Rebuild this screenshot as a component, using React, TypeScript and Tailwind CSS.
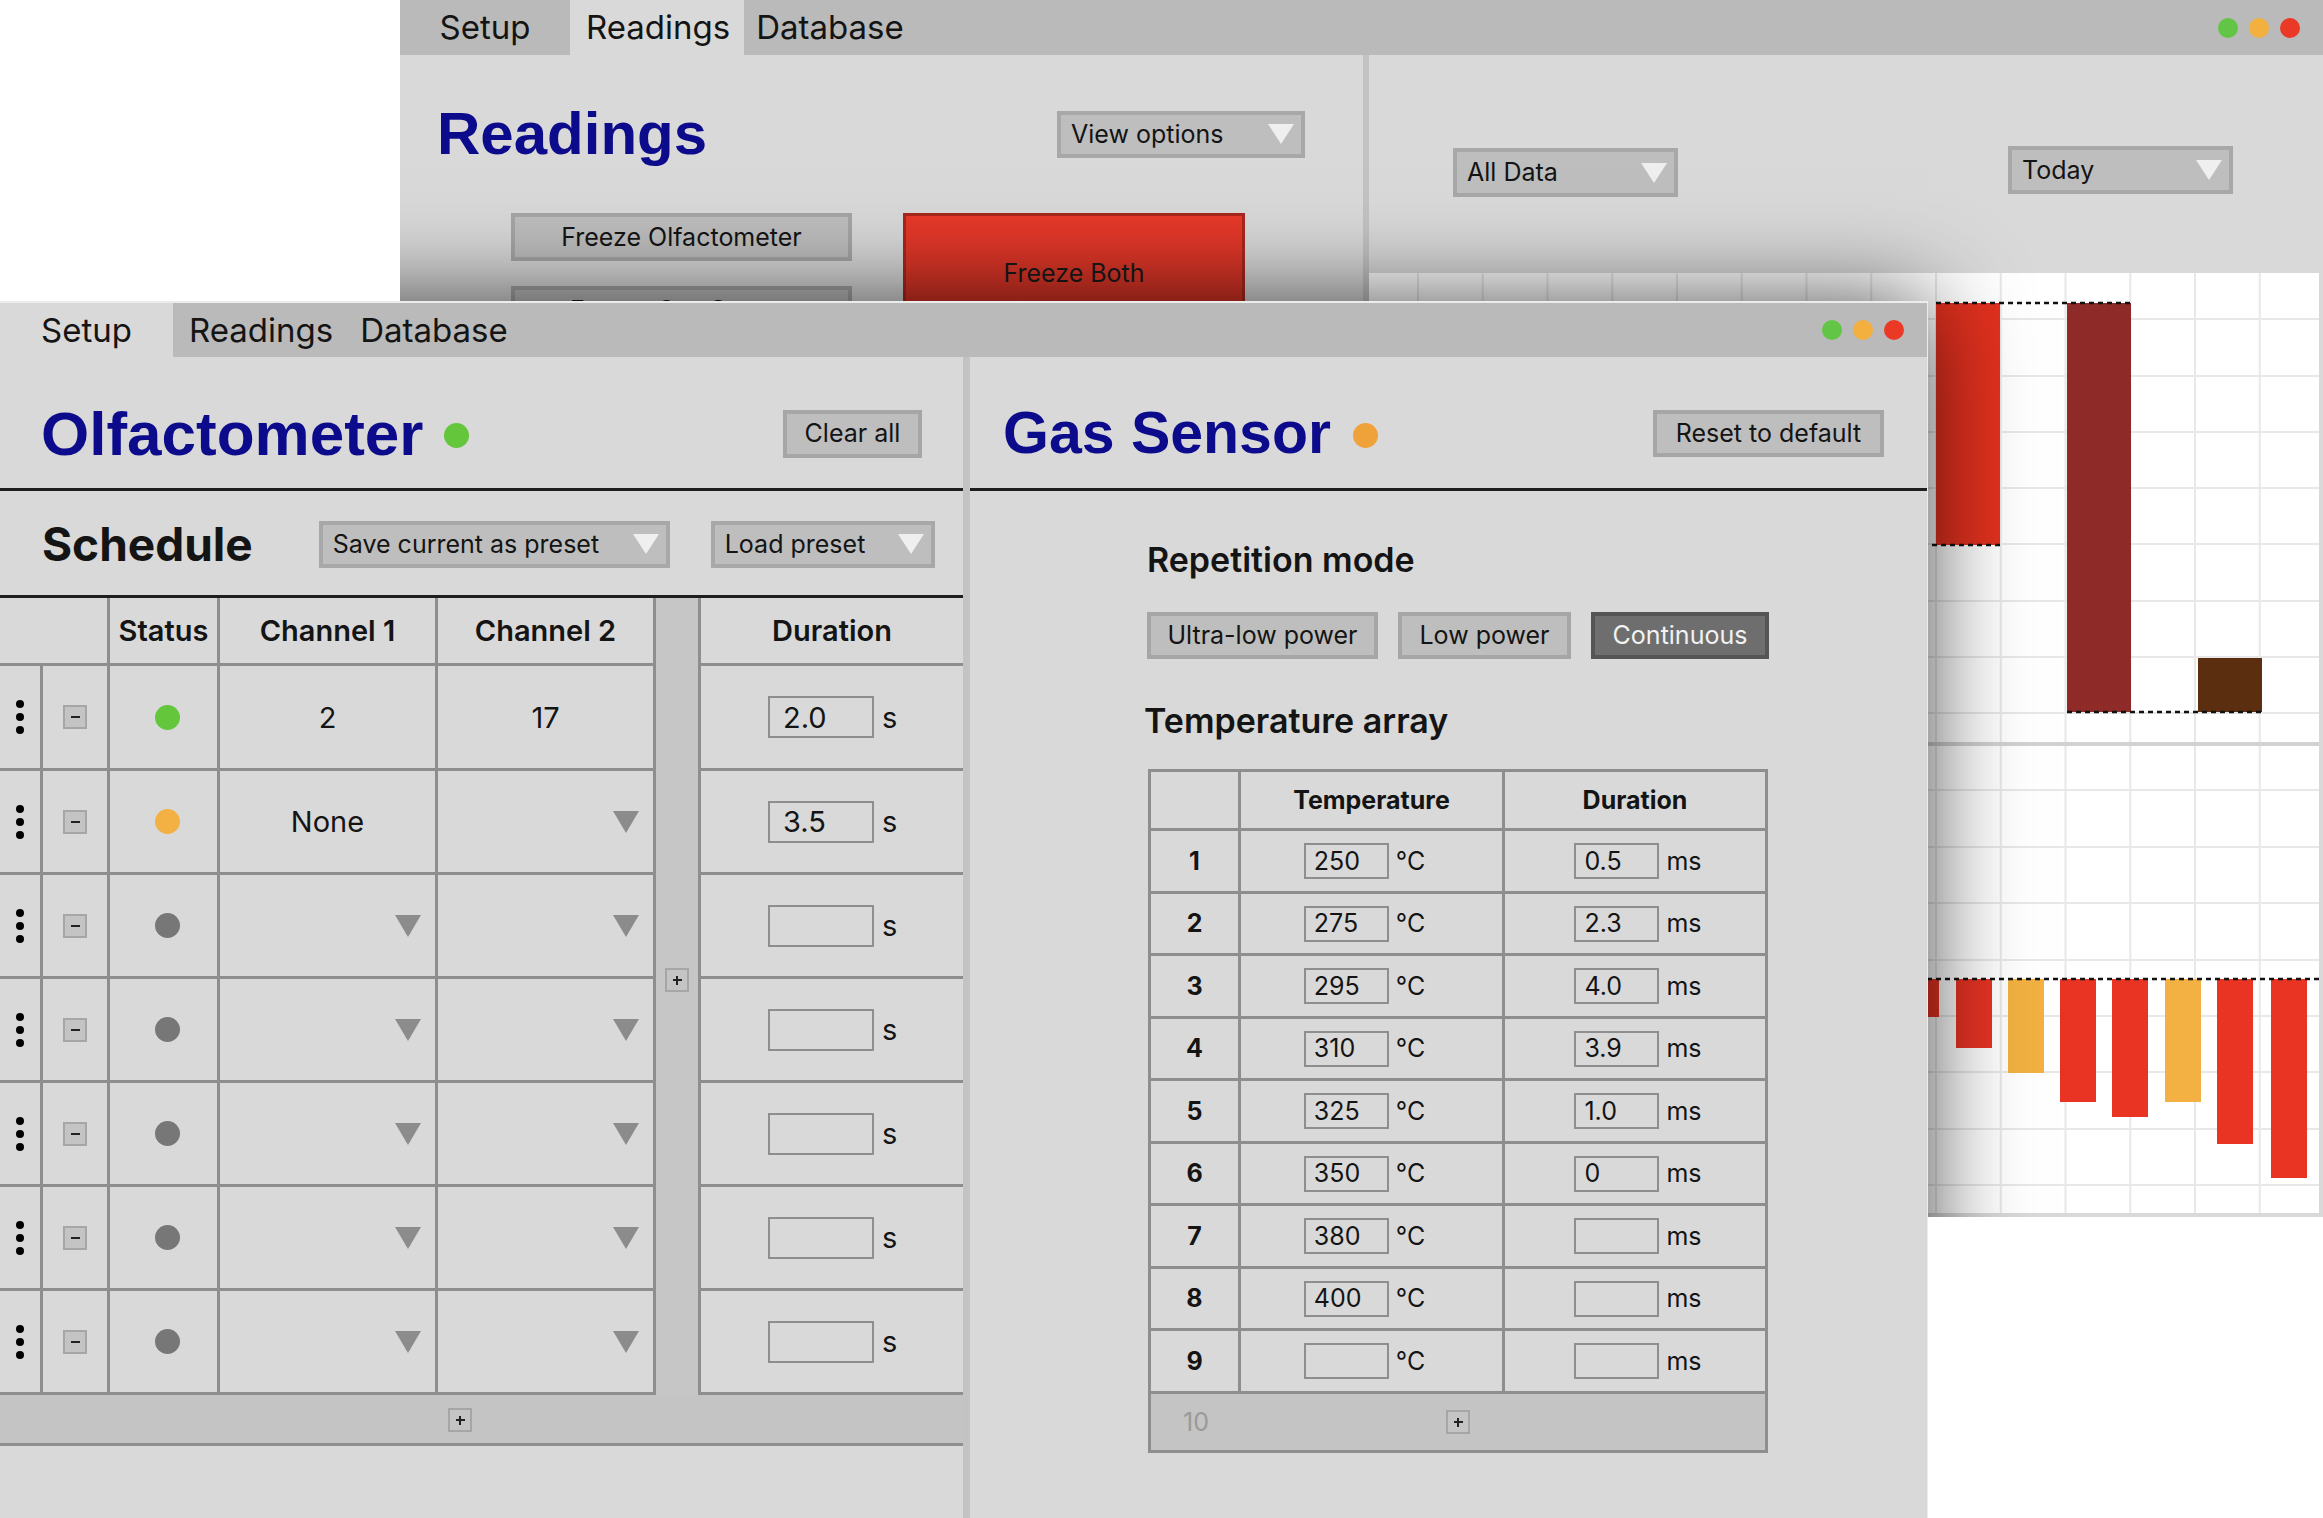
import React from "react";

const gridX = Array.from({ length: 14 }, (_, k) => 49 + 64.75 * k);

function Lights({ className }: { className?: string }) {
  return (
    <div className={"flex items-center gap-[11px] " + (className || "")}>
      <div className="w-[20px] h-[20px] rounded-full bg-[#62c545]" />
      <div className="w-[20px] h-[20px] rounded-full bg-[#f3b03e]" />
      <div className="w-[20px] h-[20px] rounded-full bg-[#ea3a26]" />
    </div>
  );
}

function Heading({ children, className }: { children: React.ReactNode; className?: string }) {
  return (
    <div
      className={
        "font-['Liberation_Sans',Arial,sans-serif] font-bold leading-none text-[#0b0b8b] " + (className || "text-[60px]")
      }
    >
      {children}
    </div>
  );
}

function Dropdown({ label, className }: { label: string; className?: string }) {
  return (
    <div
      className={
        "flex items-center justify-between border-[4px] border-[#a8a8a8] bg-[#bebebe] pl-[10px] pr-[7px] text-[25px] leading-none " +
        (className || "")
      }
    >
      <span>{label}</span>
      <svg width="26" height="20" viewBox="0 0 26 20">
        <polygon points="0,0 26,0 13,20" fill="#efefef" />
      </svg>
    </div>
  );
}

function Button({ children, className }: { children: React.ReactNode; className?: string }) {
  return (
    <div
      className={
        "flex items-center justify-center border-[4px] border-[#a6a6a6] bg-[#bebebe] text-[25px] leading-none " +
        (className || "")
      }
    >
      {children}
    </div>
  );
}

function SmallBox({ plus }: { plus?: boolean }) {
  return (
    <div className="relative flex w-[24px] h-[24px] items-center justify-center border-2 border-[#a6a6a6] bg-[#c4c4c4]">
      <div className="w-[9px] h-[2px] bg-[#222]" />
      {plus && <div className="absolute w-[2px] h-[9px] bg-[#222]" />}
    </div>
  );
}

function Tri() {
  return (
    <svg width="26" height="22" viewBox="0 0 26 22">
      <polygon points="0,0 26,0 13,22" fill="#8c8c8c" />
    </svg>
  );
}

function Chart1() {
  return (
    <svg width="950" height="469" className="block">
      {gridX.map((x) => (
        <line key={x} x1={x} x2={x} y1={0} y2={469} stroke="#e8e8e8" strokeWidth={2} />
      ))}
      {[46, 103, 159, 215, 271, 328, 384, 440].map((y) => (
        <line key={y} x1={0} x2={950} y1={y} y2={y} stroke="#e8e8e8" strokeWidth={2} />
      ))}
      <rect x={567} y={30} width={64} height={242} fill="#e3311f" />
      <rect x={698} y={30} width={64} height={409} fill="#8e2a27" />
      <rect x={829} y={385} width={64} height={54} fill="#5a2e0e" />
      <g stroke="#111" strokeWidth={2.5} strokeDasharray="5 4">
        <line x1={500} x2={631} y1={272} y2={272} />
        <line x1={567} x2={762} y1={30} y2={30} />
        <line x1={698} x2={893} y1={439} y2={439} />
      </g>
    </svg>
  );
}

const bars2 = [
  { x: 482, b: 300, c: "#e93424" },
  { x: 534, b: 271, c: "#e93424" },
  { x: 587, b: 302, c: "#e93424" },
  { x: 639, b: 327, c: "#f2b142" },
  { x: 691, b: 356, c: "#e93424" },
  { x: 743, b: 371, c: "#e93424" },
  { x: 796, b: 356, c: "#f2b142" },
  { x: 848, b: 398, c: "#e93424" },
  { x: 902, b: 432, c: "#e93424" },
];

function Chart2() {
  return (
    <svg width="950" height="467" className="block">
      {gridX.map((x) => (
        <line key={x} x1={x} x2={x} y1={0} y2={467} stroke="#e8e8e8" strokeWidth={2} />
      ))}
      {[44, 101, 157, 214, 270, 326, 383, 439].map((y) => (
        <line key={y} x1={0} x2={950} y1={y} y2={y} stroke="#e8e8e8" strokeWidth={2} />
      ))}
      {bars2.map((b) => (
        <rect key={b.x} x={b.x} y={233} width={36} height={b.b - 233} fill={b.c} />
      ))}
      <line x1={0} x2={950} y1={233} y2={233} stroke="#111" strokeWidth={2.5} strokeDasharray="5 4" />
    </svg>
  );
}

function BackWindow() {
  return (
    <div className="absolute left-[400px] top-0 w-[1923px] h-[1217px] overflow-hidden bg-[#d9d9d9]">
      <div className="flex h-[55px] bg-[#bababa] text-[33px] leading-none">
        <div className="flex w-[170px] items-center justify-center">Setup</div>
        <div className="flex items-center bg-[#d9d9d9] pl-[16px] pr-[14px]">Readings</div>
        <div className="flex items-center pl-[12px]">Database</div>
        <Lights className="ml-auto mr-[23px]" />
      </div>
      <div className="flex h-[1162px]">
        <div className="flex w-[963px] flex-col">
          <div className="flex h-[158px] items-center pl-[37px] pr-[58px]">
            <Heading>Readings</Heading>
            <Dropdown label="View options" className="ml-auto w-[248px] h-[47px]" />
          </div>
          <div className="flex gap-[51px] pl-[111px]">
            <div className="flex flex-col gap-[25px]">
              <Button className="w-[341px] h-[48px]">Freeze Olfactometer</Button>
              <Button className="w-[341px] h-[48px]">Freeze Gas Sensor</Button>
            </div>
            <div className="flex w-[342px] h-[120px] items-center justify-center border-[3px] border-[#a8281e] bg-gradient-to-b from-[#e8392a] to-[#cf3024] text-[25px] leading-none text-[#1a1a1a]">
              Freeze Both
            </div>
          </div>
        </div>
        <div className="w-[6px] bg-[#c3c3c3]" />
        <div className="flex flex-1 flex-col">
          <div className="flex h-[218px] items-start">
            <Dropdown label="All Data" className="ml-[84px] mt-[93px] w-[225px] h-[49px]" />
            <Dropdown label="Today" className="ml-auto mr-[90px] mt-[91px] w-[225px] h-[48px]" />
          </div>
          <div className="w-[950px] bg-white">
            <Chart1 />
          </div>
          <div className="h-[4px] w-[950px] bg-[#d2d2d2]" />
          <div className="w-[950px] bg-white">
            <Chart2 />
          </div>
        </div>
      </div>
      <div className="pointer-events-none absolute left-[-400px] top-[301px] w-[1928px] h-[1217px] shadow-[0_0_90px_rgba(0,0,0,0.7)]" />
    </div>
  );
}

const schedule = [
  { status: "bg-[#64c63a]", ch1: "2", ch2: "17", dur: "2.0", h: "h-[105px]" },
  { status: "bg-[#f2b142]", ch1: "None", ch2: "", dur: "3.5", h: "h-[104px]" },
  { status: "bg-[#777777]", ch1: "", ch2: "", dur: "", h: "h-[104px]" },
  { status: "bg-[#777777]", ch1: "", ch2: "", dur: "", h: "h-[104px]" },
  { status: "bg-[#777777]", ch1: "", ch2: "", dur: "", h: "h-[104px]" },
  { status: "bg-[#777777]", ch1: "", ch2: "", dur: "", h: "h-[104px]" },
  { status: "bg-[#777777]", ch1: "", ch2: "", dur: "", h: "h-[104px]" },
];

function ChannelCell({ value }: { value: string }) {
  return (
    <div className="flex w-[218px] items-center justify-center border-r-[3px] border-[#8e8e8e] pr-[14px]">
      {value ? <span className="pl-[14px]">{value}</span> : <div className="ml-auto"><Tri /></div>}
    </div>
  );
}

function ScheduleTable() {
  return (
    <div className="flex text-[29px] leading-none">
      <div className="w-[656px]">
        <div className="flex h-[68px] border-b-[3px] border-[#8e8e8e] font-semibold">
          <div className="w-[110px] border-r-[3px] border-[#8e8e8e]" />
          <div className="flex w-[110px] items-center justify-center border-r-[3px] border-[#8e8e8e]">Status</div>
          <div className="flex w-[218px] items-center justify-center border-r-[3px] border-[#8e8e8e]">Channel 1</div>
          <div className="flex w-[218px] items-center justify-center border-r-[3px] border-[#8e8e8e]">Channel 2</div>
        </div>
        {schedule.map((r, i) => (
          <div key={i} className={"flex border-b-[3px] border-[#8e8e8e] " + r.h}>
            <div className="flex w-[43px] flex-col items-center justify-center gap-[5px] border-r-[3px] border-[#8e8e8e]">
              <div className="w-[8px] h-[8px] rounded-full bg-black" />
              <div className="w-[8px] h-[8px] rounded-full bg-black" />
              <div className="w-[8px] h-[8px] rounded-full bg-black" />
            </div>
            <div className="flex w-[67px] items-center justify-center border-r-[3px] border-[#8e8e8e]">
              <SmallBox />
            </div>
            <div className="flex w-[110px] items-center justify-center border-r-[3px] border-[#8e8e8e] pl-[8px]">
              <div className={"w-[25px] h-[25px] rounded-full " + r.status} />
            </div>
            <ChannelCell value={r.ch1} />
            <ChannelCell value={r.ch2} />
          </div>
        ))}
      </div>
      <div className="flex w-[45px] justify-center border-r-[3px] border-[#8e8e8e] bg-[#c6c6c6] pt-[370px]">
        <SmallBox plus />
      </div>
      <div className="w-[262px]">
        <div className="flex h-[68px] items-center justify-center border-b-[3px] border-[#8e8e8e] font-semibold">Duration</div>
        {schedule.map((r, i) => (
          <div key={i} className={"flex items-center justify-center gap-[8px] border-b-[3px] border-[#8e8e8e] " + r.h}>
            <div className="flex w-[106px] h-[42px] items-center border-2 border-[#8e8e8e] pl-[13px]">{r.dur}</div>
            <span className="w-[14px]">s</span>
          </div>
        ))}
      </div>
    </div>
  );
}

const temps = ["250", "275", "295", "310", "325", "350", "380", "400", ""];
const durs = ["0.5", "2.3", "4.0", "3.9", "1.0", "0", "", "", ""];
const tempRowH = ["h-[63px]", "h-[62px]", "h-[63px]", "h-[62px]", "h-[63px]", "h-[62px]", "h-[63px]", "h-[62px]", "h-[63px]"];

function TempTable() {
  return (
    <div className="ml-[1px] w-[620px] border-[3px] border-[#8e8e8e] text-[25px] leading-none">
      <div className="flex h-[59px] border-b-[3px] border-[#8e8e8e] font-bold">
        <div className="w-[90px] border-r-[3px] border-[#8e8e8e]" />
        <div className="flex w-[264px] items-center justify-center border-r-[3px] border-[#8e8e8e]">Temperature</div>
        <div className="flex flex-1 items-center justify-center">Duration</div>
      </div>
      {temps.map((t, i) => (
        <div key={i} className={"flex border-b-[3px] border-[#8e8e8e] " + tempRowH[i]}>
          <div className="flex w-[90px] items-center justify-center border-r-[3px] border-[#8e8e8e] font-bold">{i + 1}</div>
          <div className="flex w-[264px] items-center justify-center gap-[7px] border-r-[3px] border-[#8e8e8e] pr-[14px]">
            <div className="flex w-[85px] h-[36px] items-center border-2 border-[#8e8e8e] pl-[8px]">{t}</div>
            <span>°C</span>
          </div>
          <div className="flex flex-1 items-center justify-center gap-[7px] pl-[6px]">
            <div className="flex w-[85px] h-[36px] items-center border-2 border-[#8e8e8e] pl-[8px]">{durs[i]}</div>
            <span>ms</span>
          </div>
        </div>
      ))}
      <div className="flex h-[56px] items-center bg-[#c4c4c4]">
        <div className="w-[90px] text-center text-[#9a9a9a]">10</div>
        <div className="ml-[205px]">
          <SmallBox plus />
        </div>
      </div>
    </div>
  );
}

function FrontWindow() {
  return (
    <div className="absolute left-0 top-[301px] w-[1928px] h-[1217px] border-t-[2px] border-r border-[#ececec] bg-[#d9d9d9]">
      <div className="flex h-[54px] bg-[#bababa] text-[33px] leading-none">
        <div className="flex w-[173px] items-center justify-center bg-[#d9d9d9]">Setup</div>
        <div className="flex items-center pl-[16px] pr-[27px]">Readings</div>
        <div className="flex items-center">Database</div>
        <Lights className="ml-auto mr-[23px]" />
      </div>
      <div className="flex h-[1161px]">
        <div className="flex w-[963px] flex-col">
          <div className="flex h-[131px] items-center pl-[41px] pr-[41px] pt-[22px]">
            <Heading className="text-[62px]">Olfactometer</Heading>
            <div className="ml-[21px] mt-[4px] w-[25px] h-[25px] rounded-full bg-[#64c63a]" />
            <Button className="ml-auto w-[139px] h-[48px]">Clear all</Button>
          </div>
          <div className="h-[3px] bg-[#1e1e1e]" />
          <div className="flex h-[104px] items-center pl-[42px] pt-[2px]">
            <div className="text-[46px] font-bold leading-none">Schedule</div>
            <Dropdown label="Save current as preset" className="ml-[66px] w-[351px] h-[47px]" />
            <Dropdown label="Load preset" className="ml-[41px] w-[224px] h-[47px]" />
          </div>
          <div className="h-[3px] bg-[#1e1e1e]" />
          <ScheduleTable />
          <div className="flex h-[51px] items-center border-b-[3px] border-[#8e8e8e] bg-[#c4c4c4] pl-[448px] pt-[2px]">
            <SmallBox plus />
          </div>
        </div>
        <div className="w-[7px] bg-[#c3c3c3]" />
        <div className="flex flex-1 flex-col">
          <div className="flex h-[131px] items-center pl-[33px] pr-[43px] pt-[22px]">
            <Heading className="text-[59px]">Gas Sensor</Heading>
            <div className="ml-[22px] mt-[4px] w-[25px] h-[25px] rounded-full bg-[#f0a23a]" />
            <Button className="ml-auto w-[231px] h-[47px]">Reset to default</Button>
          </div>
          <div className="h-[3px] bg-[#1e1e1e]" />
          <div className="flex flex-col items-start pl-[177px]">
            <div className="mt-[52px] text-[34px] font-semibold leading-none">Repetition mode</div>
            <div className="mt-[35px] flex gap-[20px]">
              <Button className="w-[231px] h-[47px]">Ultra-low power</Button>
              <Button className="w-[173px] h-[47px]">Low power</Button>
              <div className="flex w-[178px] h-[47px] items-center justify-center border-[4px] border-[#555555] bg-[#6e6e6e] text-[25px] leading-none text-[#f2f2f2]">
                Continuous
              </div>
            </div>
            <div className="ml-[-3px] mt-[45px] text-[34px] font-semibold leading-none">Temperature array</div>
            <div className="mt-[31px]">
              <TempTable />
            </div>
          </div>
        </div>
      </div>
    </div>
  );
}

export default function App() {
  return (
    <div className="relative w-[2323px] h-[1518px] overflow-hidden bg-white font-['Inter','Liberation_Sans',sans-serif] text-[#141414]">
      <BackWindow />
      <FrontWindow />
    </div>
  );
}
